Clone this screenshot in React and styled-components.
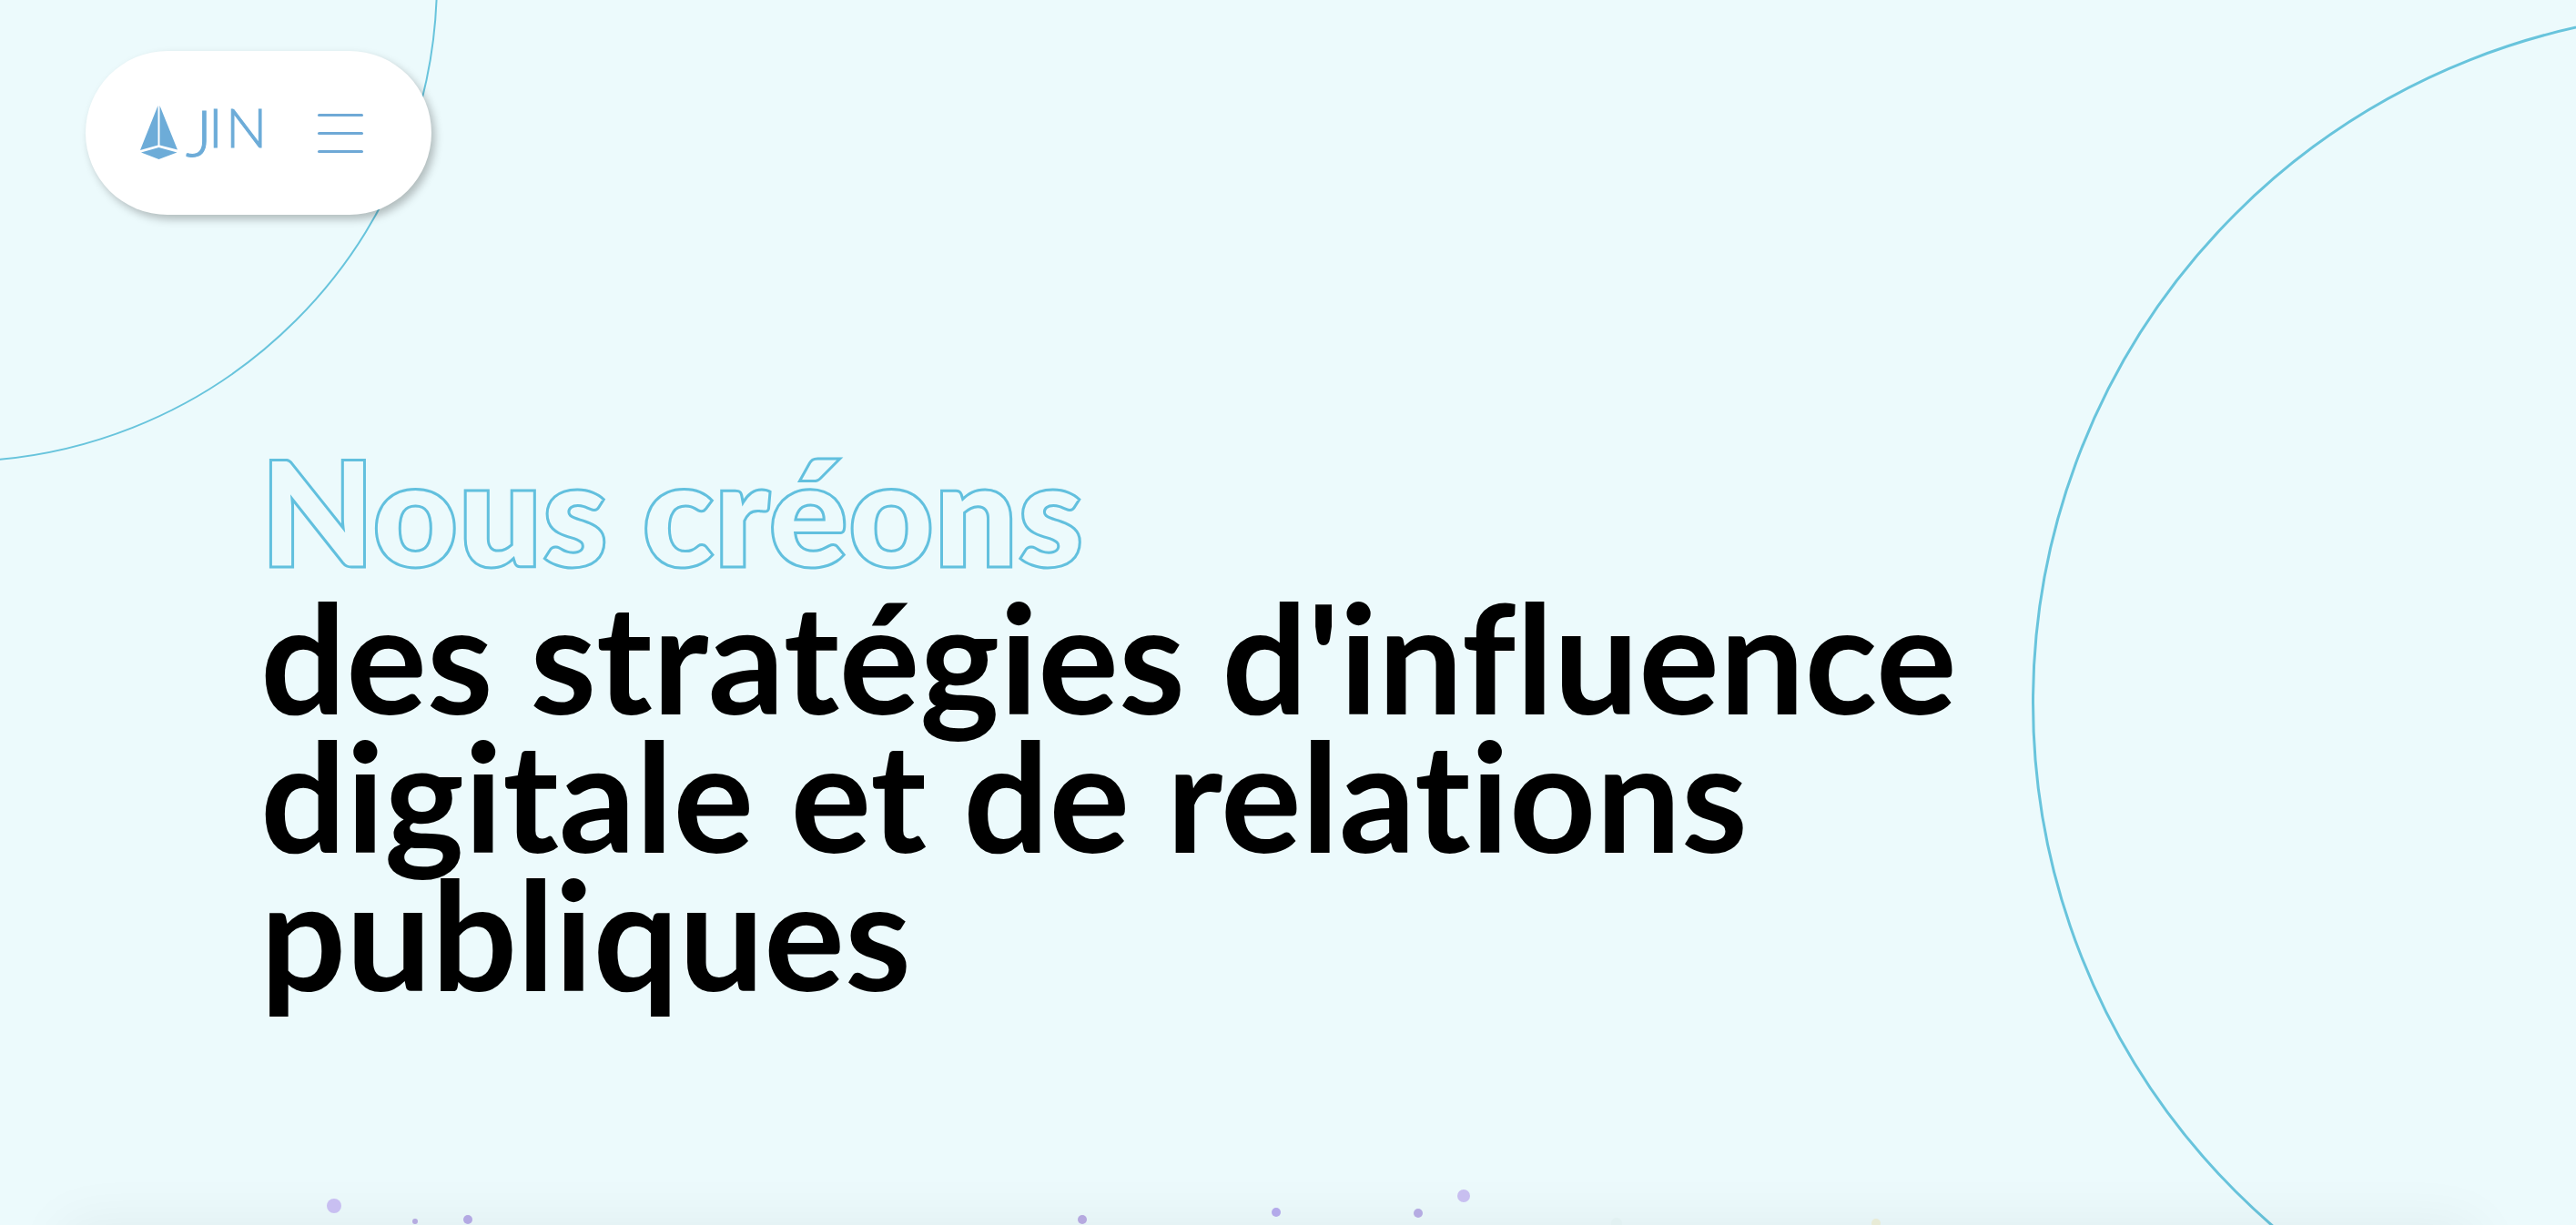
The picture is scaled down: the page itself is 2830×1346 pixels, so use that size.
import styled, { createGlobalStyle } from "styled-components";

const dots = [
  { x: 367, y: 45, r: 8, color: "#c8bff1" },
  { x: 456, y: 62, r: 3, color: "#b5abe0" },
  { x: 514, y: 60, r: 5, color: "#b3a9e3" },
  { x: 1189, y: 60, r: 5, color: "#b5a9df" },
  { x: 1402, y: 52, r: 5, color: "#b3aaea" },
  { x: 1558, y: 53, r: 5, color: "#b5abe2" },
  { x: 1608, y: 34, r: 7, color: "#c8bff0" },
  { x: 1776, y: 64, r: 6, color: "#e2f1f2" },
  { x: 2061, y: 64, r: 5, color: "#e8ebd6" },
];

export default function App() {
  return (
    <>
      <GlobalStyle />
      <StyledPage>
        <StyledLeftCircle />
        <StyledRightCircle />
        <StyledHeader>
          <StyledNav>
            <StyledLogoLink href="/" aria-label="JIN">
              <Logo />
            </StyledLogoLink>
            <StyledMenuButton type="button" aria-label="Menu">
              <StyledMenuBar />
              <StyledMenuBar />
              <StyledMenuBar />
            </StyledMenuButton>
          </StyledNav>
        </StyledHeader>
        <StyledHero>
          <StyledTitle>
            <StyledOutline>Nous créons</StyledOutline>
            des stratégies d'influence digitale et de relations publiques
          </StyledTitle>
        </StyledHero>
        <StyledNextShadow />
        <StyledDots aria-hidden="true">
          {dots.map((dot) => (
            <circle key={dot.x} cx={dot.x} cy={dot.y} r={dot.r} fill={dot.color} />
          ))}
        </StyledDots>
      </StyledPage>
    </>
  );
}

function Logo() {
  return (
    <StyledLogo viewBox="0 0 140 64" aria-hidden="true">
      <path d="M19.5 2 0 51 19.5 45.5ZM21.5 2 41 50.5 21.5 45.5Z" />
      <path d="M20.5 48 40.5 53.5 20.5 61 1 53.5Z" />
      <text x="50" y="58" fontSize="70">
        J
      </text>
      <text x="75" y="48" fontSize="60">
        I
      </text>
      <text x="94" y="48" fontSize="60">
        N
      </text>
    </StyledLogo>
  );
}

const GlobalStyle = createGlobalStyle`
  *,
  *::before,
  *::after {
    box-sizing: border-box;
  }

  body {
    margin: 0;
    background-color: #ecfafc;
    color: #000000;
    font-family: Lato, "Open Sans", sans-serif;
  }
`;

const StyledPage = styled.main`
  position: relative;
  min-height: 100vh;
  overflow: hidden;
`;

const StyledCircle = styled.div`
  position: absolute;
  border: 3px solid #68c4dc;
  border-radius: 50%;
`;

const StyledLeftCircle = styled(StyledCircle)`
  top: -552px;
  left: -579px;
  width: 1060px;
  height: 1060px;
  border-width: 2px;
`;

const StyledRightCircle = styled(StyledCircle)`
  top: 11px;
  right: -924px;
  width: 1522px;
  height: 1522px;
`;

const StyledHeader = styled.header`
  position: relative;
  display: flex;
  padding: 56px 94px 0;
`;

const StyledNav = styled.nav`
  display: flex;
  align-items: center;
  gap: 55px;
  height: 180px;
  padding: 0 75px 0 60px;
  border-radius: 90px;
  background-color: #ffffff;
  box-shadow: 4px 5px 10px rgba(0, 0, 0, 0.25);
`;

const StyledLogoLink = styled.a`
  display: flex;
`;

const StyledLogo = styled.svg`
  width: 140px;
  height: 64px;
  fill: #6dacd8;
  overflow: visible;
  font-weight: 300;

  text {
    stroke: #6dacd8;
    stroke-width: 1px;
  }
`;

const StyledMenuButton = styled.button`
  display: flex;
  flex-direction: column;
  gap: 17px;
  padding: 0;
  border: none;
  background: none;
  cursor: pointer;
`;

const StyledMenuBar = styled.span`
  width: 50px;
  height: 3px;
  border-radius: 2px;
  background-color: #6fa9d6;
`;

const StyledHero = styled.section`
  position: relative;
  max-width: 2400px;
  padding: 249px 100px 200px 286px;
`;

const StyledTitle = styled.h1`
  margin: 0;
  font-size: 166px;
  font-weight: 700;
  line-height: 152px;
  font-variant-ligatures: none;
`;

const StyledOutline = styled.span`
  display: block;
  margin-bottom: 8px;
  font-size: 162px;
  font-weight: 800;
  color: transparent;
  -webkit-text-stroke: 3px #62c0de;
`;

const StyledNextShadow = styled.div`
  position: absolute;
  top: 100%;
  left: 70px;
  right: 110px;
  height: 200px;
  box-shadow: 0 0 60px rgba(0, 0, 0, 0.06);
`;

const StyledDots = styled.svg`
  position: absolute;
  bottom: 0;
  left: 0;
  width: 100%;
  height: 66px;
`;
